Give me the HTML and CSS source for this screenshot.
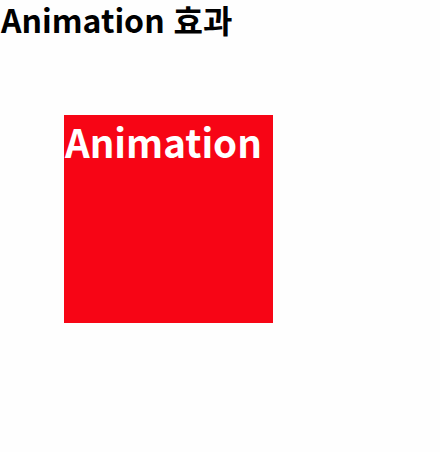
FILE: index.html
```html
<!DOCTYPE html>
<html lang="ko">
<head>
<meta charset="utf-8">
<link rel="stylesheet" href="styles.css">
</head>
<body>
<h1 class="title">Animation 효과</h1>
<div class="box">Animation</div>
</body>
</html>
```
FILE: styles.css
```css
html, body {
  margin: 0;
  padding: 0;
  background: #fefefe;
}
body {
  font-family: "Noto Sans CJK KR", sans-serif;
}
.title {
  margin: 0;
  padding-left: 1px;
  font-size: 32px;
  font-weight: 700;
  line-height: 38px;
  color: #000;
}
.box {
  margin: 77px 0 0 64px;
  padding-left: 1px;
  width: 208px;
  height: 208px;
  background: #f70515;
  color: #fff;
  font-size: 38.5px;
  font-weight: 700;
  line-height: 52px;
}
```
